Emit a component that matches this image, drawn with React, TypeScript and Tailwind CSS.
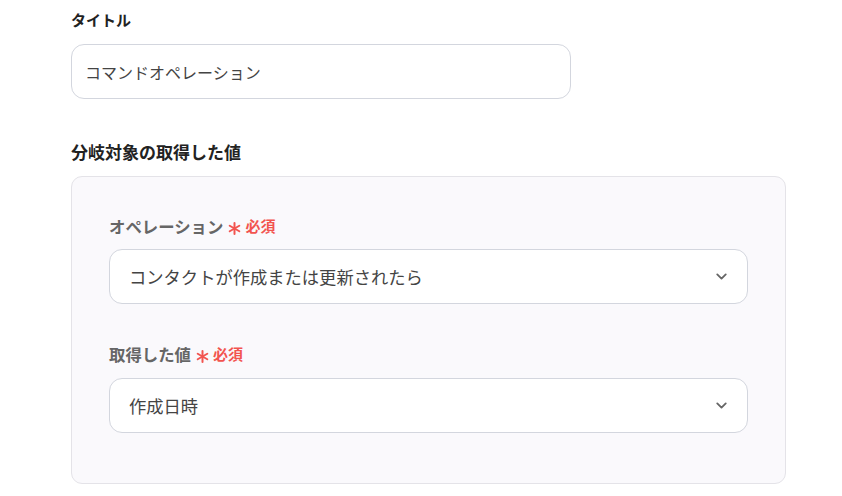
import { ChevronDown } from 'lucide-react'

const font = { fontFamily: '"Noto Sans CJK JP", "Noto Sans", sans-serif' }

function Required() {
  return (
    <span className="ml-[5px] inline-flex items-center gap-[4px] text-[#f2544f]">
      <svg width="13" height="13" viewBox="0 0 13 13" className="translate-y-[2px]">
        <g stroke="currentColor" strokeWidth="2" strokeLinecap="round">
          <line x1="6.5" y1="1" x2="6.5" y2="12" />
          <line x1="1.7" y1="3.75" x2="11.3" y2="9.25" />
          <line x1="1.7" y1="9.25" x2="11.3" y2="3.75" />
        </g>
      </svg>
      <span className="text-[15px] font-semibold">必須</span>
    </span>
  )
}

function SelectBox({ value }: { value: string }) {
  return (
    <div className="flex h-[55px] w-[639px] items-center justify-between rounded-[13px] border border-[#d3d6de] bg-white pl-[19px] pr-[17px]">
      <span className="text-[17.3px] text-[#444]">{value}</span>
      <ChevronDown size={17} strokeWidth={2.6} className="text-[#666]" />
    </div>
  )
}

export default function App() {
  return (
    <div className="min-h-[496px] bg-white pl-[71px] pt-[9px]" style={font}>
      <p className="text-[15px] font-bold leading-[22px] text-[#222]">タイトル</p>
      <div className="mt-[13px] flex h-[55px] w-[500px] items-center rounded-[13px] border border-[#d3d6de] bg-white px-[13px]">
        <span className="text-[16px] text-[#444]">コマンドオペレーション</span>
      </div>

      <p className="mt-[41px] text-[17px] font-bold leading-[24px] text-[#222]">分岐対象の取得した値</p>
      <div className="mt-[12px] h-[308px] w-[715px] rounded-[11px] border border-[#e4e3e8] bg-[#faf9fc] px-[37px] pt-[37px]">
        <div className="flex items-center text-[16.4px] font-bold leading-[24px] text-[#666]">
          オペレーション
          <Required />
        </div>
        <div className="mt-[11px]">
          <SelectBox value="コンタクトが作成または更新されたら" />
        </div>
        <div className="mt-[38px] flex items-center text-[16.4px] font-bold leading-[24px] text-[#666]">
          取得した値
          <Required />
        </div>
        <div className="mt-[12px]">
          <SelectBox value="作成日時" />
        </div>
      </div>
    </div>
  )
}
